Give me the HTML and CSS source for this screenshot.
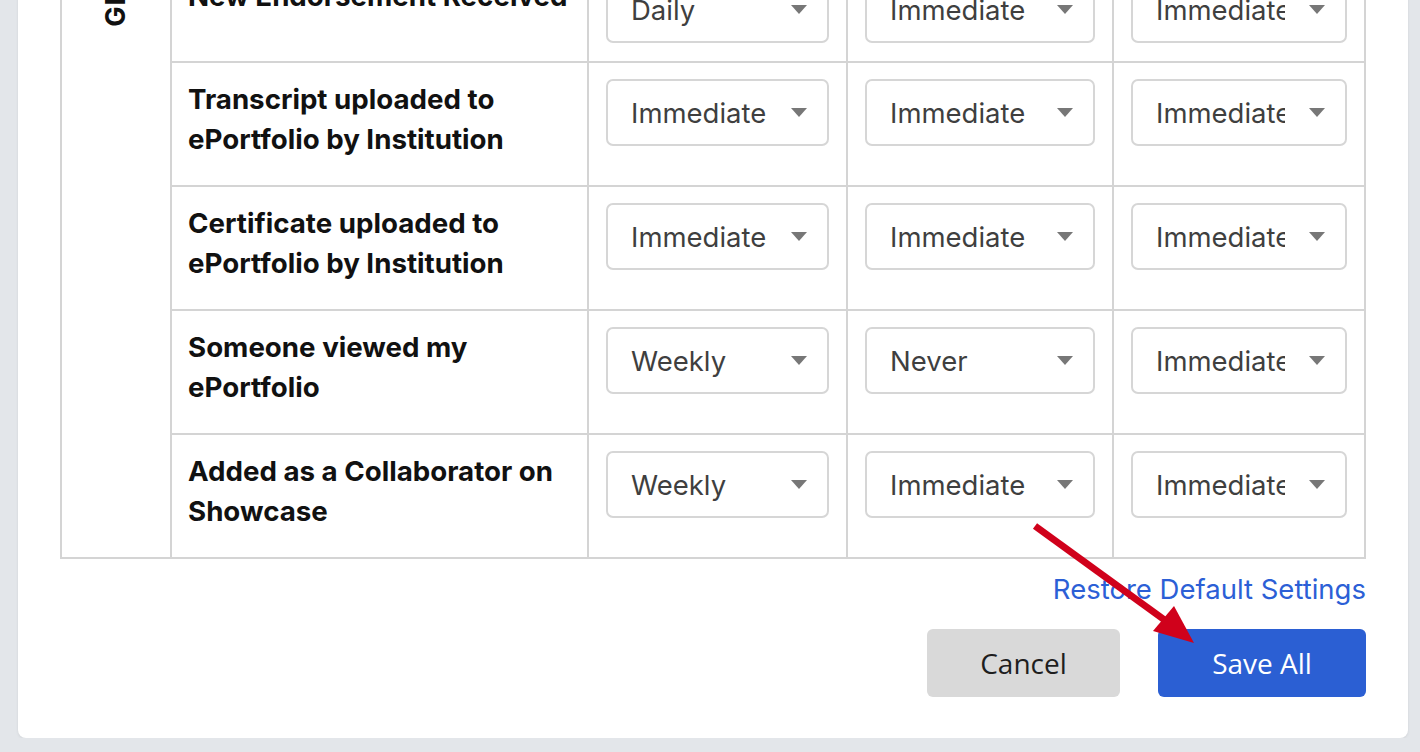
FILE: index.html
```html
<!DOCTYPE html>
<html lang="en">
<head>
    <meta charset="UTF-8">
    <meta name="viewport" content="width=device-width, initial-scale=1.0">
    <title>Notification Settings</title>
    <link rel="stylesheet" href="styles.css">
</head>
<body>
    <div class="card">
        <table class="prefs">
            <colgroup>
                <col class="c-group">
                <col class="c-label">
                <col class="c-opt1">
                <col class="c-opt2">
                <col class="c-opt3">
            </colgroup>
            <tbody>
                <tr>
                    <td class="group" rowspan="5"><span class="group-name">GENERAL</span></td>
                    <td class="label"><p>New Endorsement Received</p></td>
                    <td><div class="select"><span class="value">Daily</span><span class="caret"></span></div></td>
                    <td><div class="select"><span class="value">Immediate</span><span class="caret"></span></div></td>
                    <td><div class="select"><span class="value">Immediate</span><span class="caret"></span></div></td>
                </tr>
                <tr>
                    <td class="label"><p>Transcript uploaded to ePortfolio by Institution</p></td>
                    <td><div class="select"><span class="value">Immediate</span><span class="caret"></span></div></td>
                    <td><div class="select"><span class="value">Immediate</span><span class="caret"></span></div></td>
                    <td><div class="select"><span class="value">Immediate</span><span class="caret"></span></div></td>
                </tr>
                <tr>
                    <td class="label"><p>Certificate uploaded to ePortfolio by Institution</p></td>
                    <td><div class="select"><span class="value">Immediate</span><span class="caret"></span></div></td>
                    <td><div class="select"><span class="value">Immediate</span><span class="caret"></span></div></td>
                    <td><div class="select"><span class="value">Immediate</span><span class="caret"></span></div></td>
                </tr>
                <tr>
                    <td class="label"><p>Someone viewed my ePortfolio</p></td>
                    <td><div class="select"><span class="value">Weekly</span><span class="caret"></span></div></td>
                    <td><div class="select"><span class="value">Never</span><span class="caret"></span></div></td>
                    <td><div class="select"><span class="value">Immediate</span><span class="caret"></span></div></td>
                </tr>
                <tr>
                    <td class="label"><p>Added as a Collaborator on Showcase</p></td>
                    <td><div class="select"><span class="value">Weekly</span><span class="caret"></span></div></td>
                    <td><div class="select"><span class="value">Immediate</span><span class="caret"></span></div></td>
                    <td><div class="select"><span class="value">Immediate</span><span class="caret"></span></div></td>
                </tr>
            </tbody>
        </table>

        <div class="restore"><a href="#">Restore Default Settings</a></div>

        <div class="actions">
            <button class="btn cancel">Cancel</button>
            <button class="btn save">Save All</button>
        </div>
    </div>

    <!-- annotation arrow -->
    <svg class="annotation" width="1420" height="752" viewBox="0 0 1420 752">
        <line x1="1035" y1="526" x2="1166" y2="621" stroke="#d0011b" stroke-width="7"/>
        <polygon points="1153,631 1174,606 1194,643" fill="#d0011b"/>
    </svg>
</body>
</html>
```

FILE: styles.css
```css
body {
    margin: 0;
    background: #e3e6ea;
    font-family: Inter, "Liberation Sans", sans-serif;
    color: #111;
}
.card {
    width: 1390px;
    box-sizing: border-box;
    margin: -82px 0 0 18px;
    padding: 40px 42px 41px;
    background: #fff;
    border-radius: 8px;
    box-shadow: 0 1px 3px rgba(0,0,0,0.08);
}
.prefs {
    width: 1306px;
    border-collapse: collapse;
    table-layout: fixed;
}
.c-group { width: 110px; }
.c-label { width: 417px; }
.c-opt1 { width: 259px; }
.c-opt2 { width: 266px; }
.c-opt3 { width: 252px; }

.prefs td {
    border: 2px solid #d4d4d4;
    padding: 16px 17px 18px;
    vertical-align: top;
}
.prefs td.group {
    padding: 0;
    text-align: center;
}
.group-name {
    display: inline-block;
    margin-top: -67px;
    writing-mode: vertical-rl;
    transform: rotate(180deg);
    font-size: 27px;
    font-weight: 700;
    line-height: 30px;
    letter-spacing: 1px;
}
.prefs td.label {
    padding-left: 16px;
}
.label p {
    margin: 0 0 8px;
    font-size: 27.7px;
    font-weight: 700;
    line-height: 40px;
}

.select {
    display: flex;
    align-items: center;
    height: 67px;
    box-sizing: border-box;
    padding: 0 20px 0 23px;
    border: 2px solid #d6d6d6;
    border-radius: 7px;
    background: #fff;
}
.value {
    flex: 1;
    min-width: 0;
    margin-right: 24px;
    overflow: hidden;
    white-space: nowrap;
    font-size: 27.5px;
    color: #3f3f3f;
}
.caret {
    width: 0;
    height: 0;
    border-left: 8px solid transparent;
    border-right: 8px solid transparent;
    border-top: 9px solid #777;
}

.restore {
    margin-top: 10px;
    text-align: right;
    line-height: 40px;
}
.restore a {
    font-size: 27.5px;
    color: #2c5fd6;
    text-decoration: none;
}

.actions {
    display: flex;
    justify-content: flex-end;
    gap: 38px;
    margin-top: 16px;
}
.btn {
    height: 68px;
    border: none;
    border-radius: 6px;
    font-family: "Open Sans", "Noto Sans", sans-serif;
    font-size: 28px;
    cursor: pointer;
}
.cancel {
    width: 193px;
    background: #d9d9d9;
    color: #1e1e1e;
}
.save {
    width: 208px;
    background: #2b5fd3;
    color: #fff;
    font-weight: 500;
}

.annotation {
    position: absolute;
    top: 0;
    left: 0;
    pointer-events: none;
}
```
